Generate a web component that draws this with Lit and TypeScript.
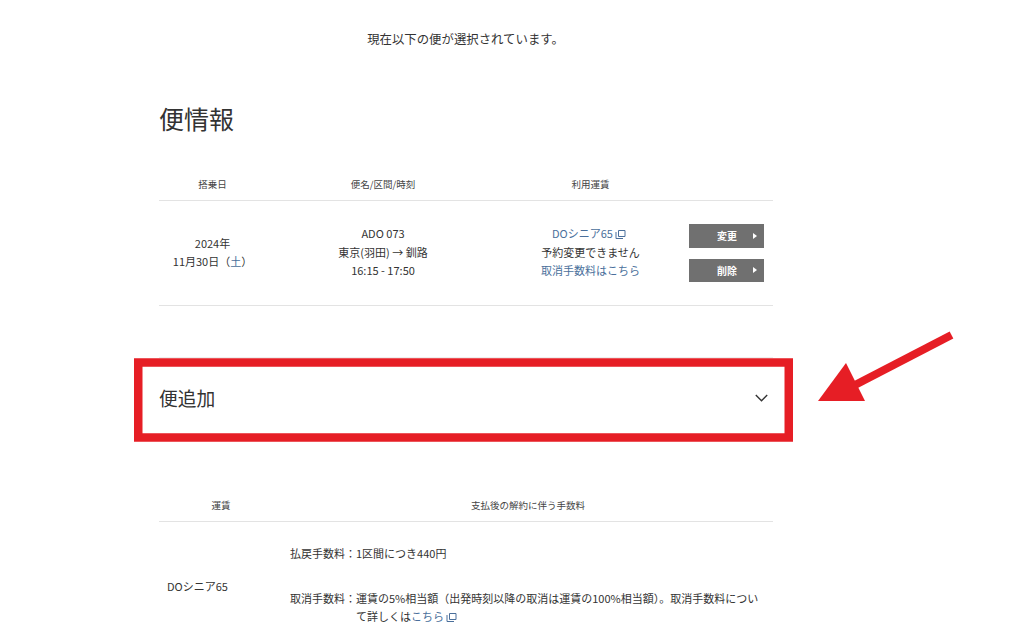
import { LitElement, html, css, svg } from "lit";
import { customElement } from "lit/decorators.js";

const copyIcon = html`<svg class="copy" viewBox="0 0 11 11" width="11" height="11" aria-hidden="true">
  <path d="M3.5 2.5h6.5v6h-6.5z M1 4v6.5h7" fill="none" stroke="currentColor" stroke-width="1"/>
</svg>`;

const caret = html`<svg class="caret" viewBox="0 0 4 6" width="4" height="6" aria-hidden="true"><path d="M0 0 4 3 0 6z" fill="#fff"/></svg>`;

@customElement("app-root")
export class AppRoot extends LitElement {
  static styles = css`
    :host {
      display: block;
      position: relative;
      width: 1024px;
      height: 634px;
      overflow: hidden;
      background: #fff;
      color: #333;
      font-family: "Noto Sans CJK JP", "Noto Sans", sans-serif;
      font-size: 11px;
      line-height: 18.5px;
    }
    .page { width: 614px; margin-left: 159px; }
    .intro {
      height: 78px;
      width: 613px;
      display: flex;
      align-items: center;
      justify-content: center;
      font-size: 12.4px;
    }
    h2 {
      margin: 0 0 2px;
      height: 80px;
      display: flex;
      align-items: center;
      font-size: 25px;
      font-weight: 400;
    }
    .grid {
      display: grid;
      grid-template-columns: 107px 234px 181px 92px;
    }
    .head {
      padding: 16px 0 8px;
      border-bottom: 1px solid #e3e3e3;
      text-align: center;
      font-size: 9.5px;
      line-height: 16px;
      color: #444;
    }
    .cell {
      padding-bottom: 2px;
      height: 102px;
      border-bottom: 1px solid #e3e3e3;
      display: flex;
      flex-direction: column;
      align-items: center;
      justify-content: center;
      text-align: center;
    }
    .actions { padding: 0 9px 0 0; height: 104px; align-items: flex-end; gap: 11px; }
    .btn {
      width: 75px;
      height: 23.5px;
      background: #707070;
      color: #fff;
      display: flex;
      align-items: center;
      font-size: 10px;
      font-weight: 700;
      padding: 1px 0 0 28px;
      box-sizing: border-box;
    }
    .caret { margin: -1px 0 0 16px; }
    .link { color: #4a6f9b; }
    .fare-link { margin-right: 3px; }
    .copy { color: #4a6f9b; vertical-align: -1px; margin-left: 2px; }
    .accordion {
      margin-top: 51px;
      height: 80px;
      border-top: 1px solid #eee;
      display: flex;
      align-items: center;
      justify-content: space-between;
      font-size: 18.8px;
      padding-right: 5px;
    }
    .chevron { display: block; }
    .fees { margin-top: 43px; display: grid; grid-template-columns: 124px 490px; }
    .fare {
      display: flex;
      align-items: center;
      padding-left: 8px;
    }
    .fee-body { padding: 22px 0 25px 7px; }
    .fee-row { display: flex; line-height: 18px; }
    .fee-row + .fee-row { margin-top: 27px; }
    .fee-row dt { flex: none; width: 66px; }
    .fee-row dd { margin: 0; width: 412px; }
    dl { margin: 0; }
    .overlay { position: absolute; left: 0; top: 0; pointer-events: none; }
  `;

  render() {
    return html`
      <div class="page">
        <div class="intro">現在以下の便が選択されています。</div>
        <h2>便情報</h2>
        <div class="grid">
          <div class="head">搭乗日</div>
          <div class="head">便名/区間/時刻</div>
          <div class="head">利用運賃</div>
          <div class="head"></div>
          <div class="cell">
            <div>2024年</div>
            <div>11月30日（<span class="link">土</span>）</div>
          </div>
          <div class="cell">
            <div>ADO 073</div>
            <div>東京(羽田) → 釧路</div>
            <div>16:15 - 17:50</div>
          </div>
          <div class="cell">
            <div class="link fare-link">DOシニア65${copyIcon}</div>
            <div>予約変更できません</div>
            <div class="link">取消手数料はこちら</div>
          </div>
          <div class="cell actions">
            <div class="btn">変更${caret}</div>
            <div class="btn">削除${caret}</div>
          </div>
        </div>
        <div class="accordion">
          <span>便追加</span>
          <svg class="chevron" viewBox="0 0 13 8" width="13" height="8" aria-hidden="true">
            <path d="M.8 1l5.7 5.7L12.2 1" fill="none" stroke="#333" stroke-width="1.4"/>
          </svg>
        </div>
        <div class="fees">
          <div class="head">運賃</div>
          <div class="head">支払後の解約に伴う手数料</div>
          <div class="fare">DOシニア65</div>
          <dl class="fee-body">
            <div class="fee-row"><dt>払戻手数料：</dt><dd>1区間につき440円</dd></div>
            <div class="fee-row"><dt>取消手数料：</dt><dd>運賃の5%相当額（出発時刻以降の取消は運賃の100%相当額）。取消手数料について詳しくは<span class="link">こちら</span>${copyIcon}</dd></div>
          </dl>
        </div>
      </div>
      <svg class="overlay" width="1024" height="634" viewBox="0 0 1024 634" aria-hidden="true">
        ${svg`<rect x="138.25" y="362.5" width="650.5" height="75" fill="none" stroke="#e61e25" stroke-width="8.5"/>
        <path d="M951.5 335 855 385" stroke="#e61e25" stroke-width="8" fill="none"/>
        <path d="M818 401 846 363 865 401z" fill="#e61e25"/>`}
      </svg>
    `;
  }
}
